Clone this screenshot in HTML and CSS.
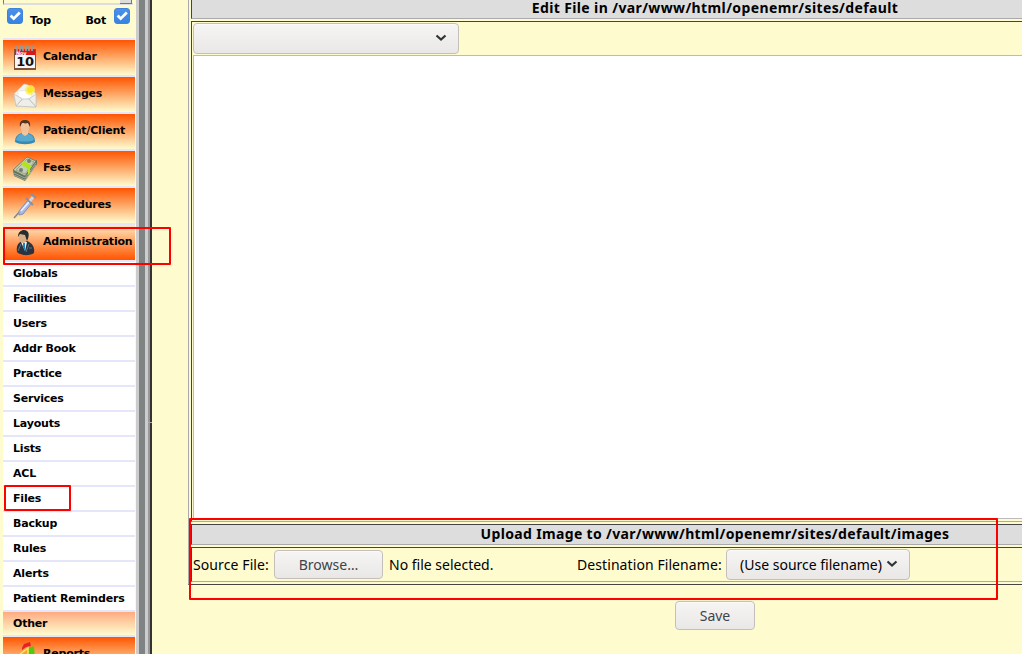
FILE: index.html
```html
<!DOCTYPE html>
<html lang="en">
<head>
<meta charset="utf-8">
<title>OpenEMR</title>
<link rel="stylesheet" href="styles.css">
</head>
<body>
<div class="app">
  <aside class="sidebar">
    <div class="top-strip"><div class="strip-box"></div></div>
    <div class="toggles">
      <span class="check"><svg viewBox="0 0 16 16"><path d="M3 7.500 6.500 11l7-7"/></svg></span>
      <span class="top-label">Top</span>
      <span class="bot-label">Bot</span>
      <span class="check"><svg viewBox="0 0 16 16"><path d="M3 7.500 6.500 11l7-7"/></svg></span>
    </div>
    <nav class="menu">
      <div class="main-item">
        <svg class="icon" viewBox="0 0 24 26"><path fill="#815438" d="M1 4h22v21H1z"/><path fill="#f7f7f7" d="M2 5h20v18H2z"/><path fill="#d7191c" d="M2 5h20v5H2z"/><path stroke="#999" stroke-width="1.800" d="M4 1v5M7 1v5M10 1v5M13 1v5M16 1v5M19 1v5"/><text x="3" y="10" class="cal-month">Nov</text><text x="12" y="21" class="cal-day">10</text></svg>
        <span>Calendar</span></div>
      <div class="main-item">
        <svg class="icon" viewBox="0 0 24 26"><path fill="#f2f2ef" stroke="#cfcfca" stroke-width=".7" d="M1 12 11 2l4 1 8 9v13L3 24z"/><path fill="#fff" stroke="#ddd" stroke-width=".6" d="m5 9 13-1 1 7-7 3-7-4z"/><path fill="#eeeeeb" stroke="#bbb" stroke-width=".6" d="m1 12 8 5-6 7zM23 12l-7 5 7 8zM3 24l7-7h6l7 8z"/><circle cx="17" cy="8" r="5" fill="#ffee58" opacity=".8"/><circle cx="17" cy="8" r="3" fill="#f5e92c"/></svg>
        <span>Messages</span></div>
      <div class="main-item">
        <svg class="icon" viewBox="0 0 24 26"><path fill="#358bb5" d="M2 23c0-6 3-8 7-9h6c5 1 7 4 7 9-5 3-15 3-20 0z"/><path fill="#58a9d0" d="M3 21c1-4 3-6 7-6h4c4 0 6 2 7 6-5 2-13 2-18 0z"/><path fill="#f4c6a0" d="M9 11h6v4l-3 2-3-2z"/><ellipse cx="12" cy="8" rx="4.500" ry="6" fill="#f1c29a"/><path fill="#573421" d="M7 8c-1-6 2-7 5-7s6 1 5 7l-2-4c-3 1-5 0-6 0z"/></svg>
        <span>Patient/Client</span></div>
      <div class="main-item">
        <svg class="icon" viewBox="0 0 24 26"><path fill="#5f705b" d="m0 14 1 6 11 5L24 8V4z"/><path stroke="#b9c2ad" stroke-width=".7" d="m1 17 11 5L23 7M1 19l11 5L23 9"/><path fill="#c5ccb4" stroke="#69785f" stroke-width=".8" d="M0 14 14 1l9 4-11 15z"/><path stroke="#879079" stroke-width=".7" d="m3 14 11-11 7 3-9 12z"/><circle cx="8" cy="14" r="2" fill="#71806b"/><circle cx="16" cy="5" r="2" fill="#71806b"/><path fill="#b0e51a" d="m8 8 3-3 8 5-2 3v4l-2 2v-6z"/></svg>
        <span>Fees</span></div>
      <div class="main-item">
        <svg class="icon" viewBox="0 0 24 26"><path stroke="#7e8792" stroke-width="1.500" d="m1 25 8-9M17 7l4-4"/><path fill="#aab8e4" stroke="#8791ad" d="M6 18 15 7l4 3-9 11-4 1z"/><path stroke="#e9f3ff" stroke-width="1.500" d="m8 18 8-9"/><path stroke="#8790a4" stroke-width="2" d="m13 5 7 7M18 1l5 4"/><path stroke="#cfd6df" stroke-width="3" d="m17 8 3-4"/></svg>
        <span>Procedures</span></div>
      <div class="main-item active">
        <svg class="icon" viewBox="0 0 24 26"><path fill="#293441" d="M4 22c-1-6 1-9 5-11h5c5 2 8 6 7 12-4 3-13 3-17-1z"/><path fill="#eff4f8" d="m8 12 3-1 3 1-2 9z"/><path fill="#1686c5" d="m10 13 2 0 0 8-2-4z"/><ellipse cx="10" cy="7.500" rx="4" ry="5.500" fill="#d9ad85"/><path fill="#252d31" d="M5 7c0-5 3-7 6-7 5 0 6 5 3 11l-2-6-5-1z"/><path stroke="#65717c" d="m5 21 3-7M16 14l-3 8M16 18h3"/></svg>
        <span>Administration</span></div>
      <div class="sub-item">Globals</div>
      <div class="sub-item">Facilities</div>
      <div class="sub-item">Users</div>
      <div class="sub-item">Addr Book</div>
      <div class="sub-item">Practice</div>
      <div class="sub-item">Services</div>
      <div class="sub-item">Layouts</div>
      <div class="sub-item">Lists</div>
      <div class="sub-item">ACL</div>
      <div class="sub-item">Files</div>
      <div class="sub-item">Backup</div>
      <div class="sub-item">Rules</div>
      <div class="sub-item">Alerts</div>
      <div class="sub-item">Patient Reminders</div>
      <div class="sub-item other">Other</div>
      <div class="main-item">
        <svg class="icon" viewBox="0 0 24 26"><path fill="#f5a623" d="m7 10 7-3v11H5z"/><path fill="#52c80f" d="m15 6 6-2 1 14h-8z"/><path fill="#e8202a" d="m9 6 2-4 6-2 1 4-5 1-4 3z"/><path stroke="#ffe26c" stroke-width="1.500" d="m6 13 9-7v12"/></svg>
        <span>Reports</span></div>
    </nav>
  </aside>
  <div class="splitter"><div class="grip"></div></div>
  <main class="main">
    <div class="panel">
      <div class="heading first"><span>Edit File in /var/www/html/openemr/sites/default</span></div>
      <div class="cell editor">
        <div class="control file-select"><svg class="chevron" viewBox="0 0 12 8"><path d="m1.500 1.500 4.500 4 4.500-4"/></svg></div>
        <div class="textarea"></div>
      </div>
      <div class="heading"><span>Upload Image to /var/www/html/openemr/sites/default/images</span></div>
      <div class="cell upload">
        <span class="source-label">Source File:</span>
        <div class="control browse">Browse…</div>
        <span class="file-status">No file selected.</span>
        <span class="dest-label">Destination Filename:</span>
        <div class="control dest-select"><span>(Use source filename)</span><svg class="chevron" viewBox="0 0 12 8"><path d="m1.500 1.500 4.500 4 4.500-4"/></svg></div>
      </div>
    </div>
    <div class="actions"><div class="control save">Save</div></div>
  </main>
  <div class="mark mark-admin"></div>
  <div class="mark mark-files"></div>
  <div class="mark mark-upload"></div>
</div>
</body>
</html>
```
FILE: styles.css
```css
* { box-sizing: border-box; }
body { margin: 0; overflow: hidden; background: #fefccf; font-family: "Noto Sans", sans-serif; font-size: 14px; color: #000; }
.app { position: relative; display: flex; width: 1022px; height: 654px; overflow: hidden; }
.sidebar { width: 136px; flex: none; padding-left: 3px; font: bold 11px "DejaVu Sans", sans-serif; letter-spacing: -0.2px; background: #fefccf; }
.top-strip { height: 5px; }
.strip-box { height: 5px; width: 130px; border-left: 1px solid #777; border-bottom: 2px solid #ddd; display: flex; justify-content: flex-end; }
.strip-box::after { content: ""; width: 11px; height: 3px; margin-right: 1px; background: #ddd; border-right: 1px solid #777; border-bottom: 1px solid #777; }
.toggles { height: 33px; display: flex; align-items: flex-start; padding: 3px 6px 0 4px; }
.check { width: 16px; height: 16px; border-radius: 3px; background: linear-gradient(#4a91e9, #3683e0); border: 1px solid #3c84dc; display: flex; }
.check svg { width: 14px; height: 14px; fill: none; stroke: #fff; stroke-width: 3.2; }
.top-label { margin: 6px 0 0 7px; }
.bot-label { margin: 6px 8px 0 auto; }
.menu { width: 132px; }
.main-item { height: 37px; border-top: 2px solid #e6e6fa; background: linear-gradient(#ff5500, #fefccf) padding-box; display: flex; align-items: center; padding: 0 0 3px 10px; white-space: nowrap; }
.main-item.active { background: linear-gradient(#ffe8be, #ff5500) padding-box; }
.icon { width: 24px; height: 26px; margin: 3px 6px 0 0; flex: none; fill: none; }
.cal-month { font: bold 5px "DejaVu Sans", sans-serif; fill: #fff; }
.cal-day { font: bold 13px "DejaVu Sans", sans-serif; fill: #111; text-anchor: middle; }
.sub-item { height: 25px; border-top: 2px solid #e6e6fa; background: #fff; padding-left: 10px; line-height: 23px; white-space: nowrap; }
.sub-item.other { background: linear-gradient(#ffaa80, #fefccf) padding-box; }
.splitter { width: 16px; flex: none; display: flex; align-items: center; justify-content: flex-end; background: linear-gradient(90deg, #ccc 0 3px, #7f8383 3px 9px, #ccc 9px 12px, #999 12px 14px, #333 14px); }
.grip { width: 4px; height: 1px; margin-top: 190px; background: #aaa; }
.main { flex: none; width: 1090px; padding-left: 36px; }
.panel { width: 1054px; height: 585px; border: solid #aaa; border-width: 0 1px 1px; border-bottom-color: #444; padding: 0 2px; display: flex; flex-direction: column; gap: 2px; }
.heading { flex: none; height: 21px; background: #ddd; border: 1px solid #444; border-right-color: #aaa; border-bottom-color: #aaa; text-align: center; font-weight: bold; letter-spacing: 0.34px; line-height: 17px; }
.heading.first { height: 19px; border-top: 0; line-height: 16px; letter-spacing: 0.38px; }
.cell { border: 1px solid #444; border-right-color: #aaa; border-bottom-color: #aaa; }
.editor { height: 501px; padding: 1px; }
.control { display: flex; align-items: center; justify-content: center; border: 1px solid #c4bfbb; border-radius: 4px; background: linear-gradient(#f6f5f4, #eae8e7); box-shadow: inset 0 1px #fafafa; color: #3c4448; }
.chevron { width: 12px; height: 8px; margin-top: -1px; fill: none; stroke: #2e3436; stroke-width: 2.2; }
.file-select { width: 266px; height: 31px; justify-content: flex-end; padding-right: 11px; }
.textarea { height: 464px; margin-top: 1px; border: 1px solid #bbb; background: #fff; }
.upload { height: 35px; display: flex; align-items: center; padding-left: 1px; white-space: nowrap; }
.source-label { width: 81px; letter-spacing: 0.1px; }
.browse { width: 109px; height: 29px; }
.file-status { width: 188px; margin-left: 6px; }
.dest-label { width: 149px; letter-spacing: 0.08px; }
.dest-select { width: 184px; height: 31px; gap: 4px; padding-left: 2px; color: #000; }
.actions { display: flex; justify-content: center; padding: 16px 36px 0 0; width: 1090px; }
.save { width: 80px; height: 29px; }
.mark { position: absolute; border: 2px solid #f00; border-radius: 1px; }
.mark-admin { left: 3px; top: 227px; width: 168px; height: 38px; }
.mark-files { left: 4px; top: 485px; width: 67px; height: 26px; }
.mark-upload { left: 189px; top: 518px; width: 809px; height: 82px; }
```
